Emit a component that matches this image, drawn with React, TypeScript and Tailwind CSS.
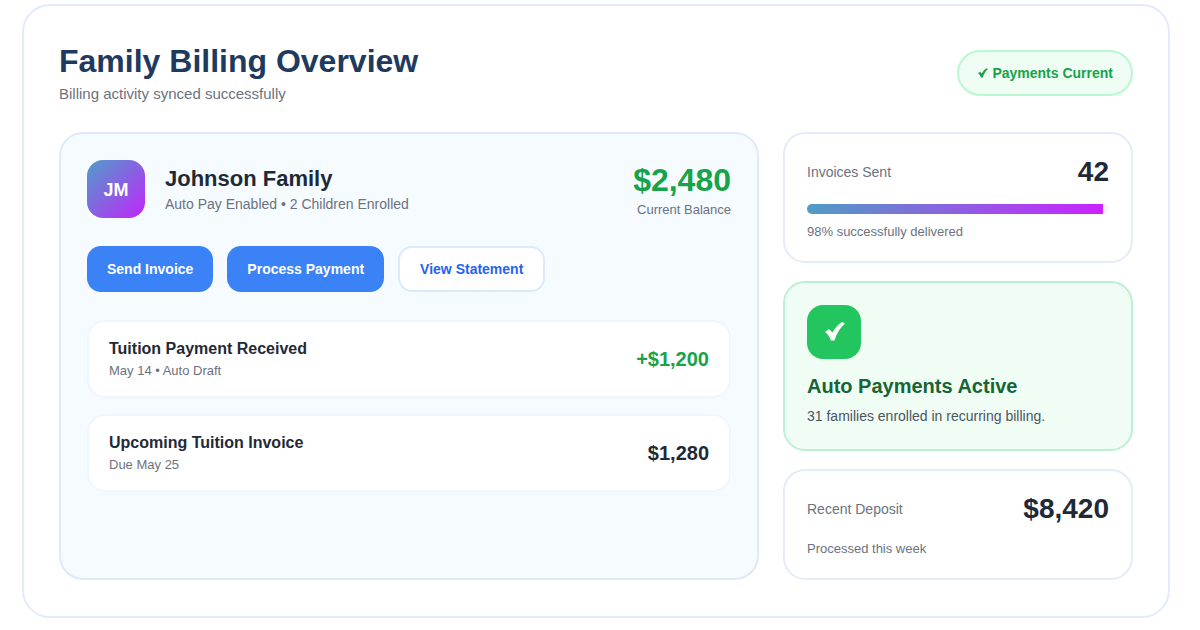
import React from "react";

const CHECK = "M0 10 L4 7 L7.5 10.5 C10 6 13 2.5 17 0 L20 1.5 C15 6 11.5 11.5 9.5 18.5 L6 18.5 C4.5 14.5 2.5 12 0 10 Z";

function Row({ title, sub, amount, green }: { title: string; sub: string; amount: string; green?: boolean }) {
  return (
    <div className="flex h-[78px] items-center justify-between rounded-[18px] border-2 border-[#f0f6ff] bg-white px-[20px]">
      <div>
        <div className="text-[16px] leading-[18px] font-bold text-[#1f2937]">{title}</div>
        <div className="mt-[5px] text-[13px] leading-[15px] text-[#6b7280]">{sub}</div>
      </div>
      <div className={`text-[20px] leading-[24px] font-bold ${green ? "text-[#16a34a]" : "text-[#1f2937]"}`}>{amount}</div>
    </div>
  );
}

export default function App() {
  return (
    <div className="h-[630px] w-[1200px] bg-white pt-[4px] pl-[22px] font-['Liberation_Sans',Arial,sans-serif]">
      <div className="h-[614px] w-[1148px] rounded-[28px] border-2 border-[#e3ebfb] bg-white px-[35px] pt-[36px]">
        <div className="flex h-[90px] items-start justify-between">
          <div>
            <h1 className="text-[32px] leading-[38px] font-bold text-[#1e3a5f]">Family Billing Overview</h1>
            <p className="mt-[5px] text-[15px] leading-[18px] text-[#6b7280]">Billing activity synced successfully</p>
          </div>
          <div className="mt-[8px] flex h-[46px] items-center rounded-full border-2 border-[#bbf7d0] bg-[#f0fdf4] px-[18px] text-[14px] font-bold text-[#16a34a]">
            <svg className="mr-[4px] ml-[1px]" width="10" height="10" viewBox="0 0 20 19" fill="#16a34a"><path d={CHECK} /></svg>
            Payments Current
          </div>
        </div>
        <div className="flex gap-[24px]">
          <div className="h-[448px] w-[700px] rounded-[24px] border-2 border-[#dfe9fb] bg-[#f6fbff] p-[26px]">
            <div className="flex items-start justify-between">
              <div className="flex items-center gap-[20px]">
                <div className="flex h-[58px] w-[58px] items-center justify-center rounded-[16px] bg-[linear-gradient(135deg,#4f9dc9,#c026fb)] pt-[3px] text-[18px] font-bold text-white">JM</div>
                <div>
                  <div className="text-[22px] leading-[26px] font-bold text-[#1f2937]">Johnson Family</div>
                  <div className="mt-[4px] text-[14px] leading-[17px] text-[#6b7280]">Auto Pay Enabled • 2 Children Enrolled</div>
                </div>
              </div>
              <div className="text-right">
                <div className="text-[32px] leading-[40px] font-bold text-[#16a34a]">$2,480</div>
                <div className="mt-[2px] text-[13px] leading-[16px] text-[#6b7280]">Current Balance</div>
              </div>
            </div>
            <div className="mt-[28px] flex gap-[14px]">
              <button className="h-[46px] rounded-[14px] bg-[#3b82f6] px-[20px] text-[14px] font-bold text-white">Send Invoice</button>
              <button className="h-[46px] rounded-[14px] bg-[#3b82f6] px-[20px] text-[14px] font-bold text-white">Process Payment</button>
              <button className="h-[46px] rounded-[14px] border-2 border-[#dbeafe] bg-white px-[20px] text-[14px] font-bold text-[#2563eb]">View Statement</button>
            </div>
            <div className="mt-[28px] flex flex-col gap-[16px]">
              <Row title="Tuition Payment Received" sub="May 14 • Auto Draft" amount="+$1,200" green />
              <Row title="Upcoming Tuition Invoice" sub="Due May 25" amount="$1,280" />
            </div>
          </div>
          <div className="flex w-[350px] flex-col gap-[18px]">
            <div className="h-[131px] rounded-[22px] border-2 border-[#e6ebfa] bg-white px-[22px] pt-[22px]">
              <div className="flex items-center justify-between">
                <span className="text-[14px] text-[#6b7280]">Invoices Sent</span>
                <span className="text-[28px] leading-[32px] font-bold text-[#1f2937]">42</span>
              </div>
              <div className="mt-[16px] h-[10px] overflow-hidden rounded-full bg-[#f3f4f6]">
                <div className="h-full w-[98%] bg-[linear-gradient(90deg,#4f9dc4,#cc22ff)]" />
              </div>
              <div className="mt-[10px] text-[13px] leading-[15px] text-[#6b7280]">98% successfully delivered</div>
            </div>
            <div className="h-[170px] rounded-[22px] border-2 border-[#bbf0d3] bg-[#f0fdf4] px-[22px] pt-[22px]">
              <div className="flex h-[54px] w-[54px] items-center justify-center rounded-[16px] bg-[#22c55e] pb-[1px] pl-[2px]">
                <svg width="20" height="19" viewBox="0 0 20 19" fill="#ffffff"><path d={CHECK} /></svg>
              </div>
              <div className="mt-[15px] text-[20px] leading-[24px] font-bold text-[#166534]">Auto Payments Active</div>
              <div className="mt-[10px] text-[14px] leading-[17px] text-[#4b5563]">31 families enrolled in recurring billing.</div>
            </div>
            <div className="h-[111px] rounded-[22px] border-2 border-[#e6ebfa] bg-white px-[22px] pt-[20px]">
              <div className="flex items-center justify-between">
                <span className="text-[14px] text-[#6b7280]">Recent Deposit</span>
                <span className="text-[28px] leading-[36px] font-bold text-[#1f2937]">$8,420</span>
              </div>
              <div className="mt-[14px] text-[13px] leading-[15px] text-[#6b7280]">Processed this week</div>
            </div>
          </div>
        </div>
      </div>
    </div>
  );
}
